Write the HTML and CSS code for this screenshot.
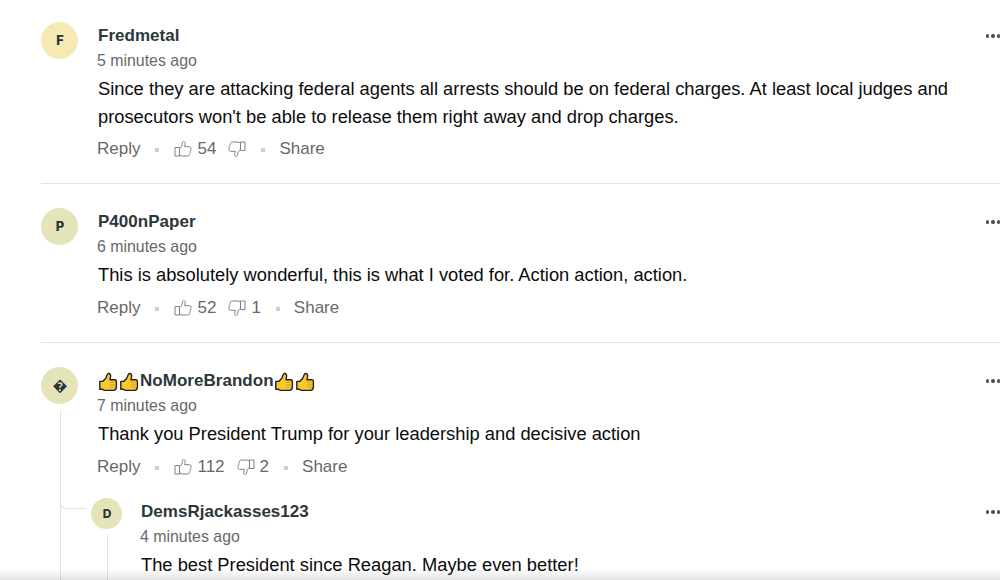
FILE: index.html
```
<!DOCTYPE html>
<html lang="en">

<head>
    <meta charset="UTF-8">
    <meta name="viewport" content="width=device-width, initial-scale=1.0">
    <title>Comments</title>
    <link rel="stylesheet" href="styles.css">
</head>

<body>
    <!-- shared icons -->
    <svg class="defs" width="0" height="0">
        <symbol id="like" viewBox="0 0 18 18">
            <path d="M1 7.5h4.5v8.5H1zM5.5 8.5C7.6 7.4 8.2 5.6 8.4 3.2C8.5 1 11 .8 11.2 3.2C11.3 4.6 11 5.7 10.6 6.7H15.6C17.3 6.8 17.4 8.4 16.6 9C17.2 9.8 17 10.8 16.2 11.4C16.6 12.3 16.3 13.1 15.6 13.6C15.8 14.8 15.2 16 13.8 16H8.6C7.4 16 6.6 15.4 5.5 15.2"/>
        </symbol>
        <symbol id="thumb" viewBox="0 0 20 20">
            <path fill="#fcc832" stroke="#24201c" stroke-width="1.4" stroke-linejoin="round" d="M1.8 9.4H4.8C6.6 8 8.6 5.6 9.4 2.4C9.8 .9 12.3 1.1 12.6 3.4C12.8 5.2 12.4 6.4 11.9 7.7H17C18.2 7.8 18.4 8.6 18.4 9.6V14.8C18.4 16.8 17.4 18.3 15.4 18.4H7C5.8 18.4 5 17.7 4.4 17.2H1.8z"/>
            <path fill="none" stroke="#d39a20" stroke-width=".8" d="M12 10.4h5.4M12 12.9h5.4M12 15.3h5"/>
        </symbol>
    </svg>

    <main class="comments">
        <article class="comment">
            <div class="side">
                <div class="avatar yellow">F</div>
            </div>
            <div class="main">
                <header class="head">
                    <h3 class="name">Fredmetal</h3>
                    <span class="more"><i></i><i></i><i></i></span>
                </header>
                <div class="time">5 minutes ago</div>
                <p class="text">Since they are attacking federal agents all arrests should be on federal charges. At least local judges and<br>prosecutors won't be able to release them right away and drop charges.</p>
                <div class="actions">
                    <span class="reply">Reply</span><i class="dot"></i>
                    <svg class="icon"><use href="#like"/></svg><span class="num">54</span>
                    <svg class="icon down"><use href="#like"/></svg><i class="dot"></i>
                    <span class="share">Share</span>
                </div>
            </div>
        </article>

        <article class="comment">
            <div class="side">
                <div class="avatar">P</div>
            </div>
            <div class="main">
                <header class="head">
                    <h3 class="name">P400nPaper</h3>
                    <span class="more"><i></i><i></i><i></i></span>
                </header>
                <div class="time">6 minutes ago</div>
                <p class="text">This is absolutely wonderful, this is what I voted for. Action action, action.</p>
                <div class="actions">
                    <span class="reply">Reply</span><i class="dot"></i>
                    <svg class="icon"><use href="#like"/></svg><span class="num">52</span>
                    <svg class="icon down"><use href="#like"/></svg><span class="num">1</span><i class="dot"></i>
                    <span class="share">Share</span>
                </div>
            </div>
        </article>

        <article class="comment thread">
            <div class="side">
                <div class="avatar unknown">&#xFFFD;</div>
                <div class="line"></div>
            </div>
            <div class="main">
                <header class="head">
                    <h3 class="name"><svg class="emoji"><use href="#thumb"/></svg><svg class="emoji"><use href="#thumb"/></svg>NoMoreBrandon<svg class="emoji"><use href="#thumb"/></svg><svg class="emoji"><use href="#thumb"/></svg></h3>
                    <span class="more"><i></i><i></i><i></i></span>
                </header>
                <div class="time">7 minutes ago</div>
                <p class="text">Thank you President Trump for your leadership and decisive action</p>
                <div class="actions">
                    <span class="reply">Reply</span><i class="dot"></i>
                    <svg class="icon"><use href="#like"/></svg><span class="num">112</span>
                    <svg class="icon down"><use href="#like"/></svg><span class="num">2</span><i class="dot"></i>
                    <span class="share">Share</span>
                </div>

                <!-- nested reply -->
                <div class="comment child">
                    <div class="branch"></div>
                    <div class="side">
                        <div class="avatar small">D</div>
                        <div class="line"></div>
                    </div>
                    <div class="main">
                        <header class="head">
                            <h3 class="name">DemsRjackasses123</h3>
                            <span class="more"><i></i><i></i><i></i></span>
                        </header>
                        <div class="time">4 minutes ago</div>
                        <p class="text">The best President since Reagan. Maybe even better!</p>
                    </div>
                </div>
            </div>
        </article>
    </main>
    <div class="fade"></div>
</body>

</html>
```
FILE: styles.css
```
* {
    box-sizing: border-box;
}

body {
    margin: 0;
    height: 580px;
    overflow: hidden;
    background: #fff;
    font-family: "Liberation Sans", Arial, sans-serif;
    color: #0c0c0c;
}

.defs {
    display: block;
}

.comments {
    height: 580px;
    overflow: hidden;
    padding-left: 41px;
}

.comment {
    display: flex;
    padding: 24px 0 20px;
    border-bottom: 1px solid #e3e3e3;
}

.comment:first-child {
    padding-top: 22px;
}

.side {
    display: flex;
    flex-direction: column;
    align-items: center;
    width: 37px;
    margin-right: 19px;
    flex: none;
}

.avatar {
    width: 37px;
    height: 37px;
    border-radius: 50%;
    background: #e4e4b8;
    color: #2a3437;
    font: 800 13px/36px Inter, "Open Sans", sans-serif;
    text-align: center;
    padding-left: 1px;
}

.avatar.yellow {
    background: #f5eab3;
}

.avatar.unknown {
    font-size: 15px;
    line-height: 38px;
}

.main {
    flex: 1;
    min-width: 0;
}

.head {
    display: flex;
    justify-content: space-between;
    align-items: center;
    height: 26px;
    margin-top: 1px;
    padding-left: 1px;
}

.name {
    display: flex;
    align-items: center;
    margin: 0;
    font-size: 17px;
    line-height: 26px;
    letter-spacing: .03px;
    color: #2d373b;
}

.more {
    display: flex;
    gap: 2px;
}

.more i {
    width: 3.5px;
    height: 3.5px;
    border-radius: 50%;
    background: #4d5357;
}

.time {
    height: 26px;
    font-size: 15.9px;
    line-height: 23px;
    color: #686868;
}

.text {
    margin: 0;
    padding-left: 1px;
    font-size: 18.32px;
    line-height: 28px;
    white-space: nowrap;
}

.actions {
    display: flex;
    align-items: center;
    height: 28px;
    margin-top: 4px;
    font-size: 17px;
    color: #686868;
}

/* one line comments are a pixel taller */
.comment + .comment .actions {
    margin-top: 5px;
}

.dot {
    width: 4px;
    height: 4px;
    margin: 1px 15px 0 15px;
    background: #cfcfcf;
}

.icon {
    width: 18px;
    height: 18px;
    fill: none;
    stroke: #808080;
    stroke-width: 1;
    stroke-linejoin: round;
}

.icon.down {
    margin-left: 12px;
    transform: rotate(180deg);
}

.num {
    margin-left: 5px;
}

.share {
    margin-left: -1px;
}

.emoji {
    width: 20px;
    height: 20px;
    margin: 2px 1px 0 0;
}

/* thread with replies */
.thread {
    padding-bottom: 0;
}

.line {
    width: 1px;
    flex: 1;
    margin: 6px 0 0 1px;
    background: #e3e3e3;
}

.child {
    position: relative;
    margin: 17px 0 0 -6px;
    padding: 0;
    border: 0;
    height: 120px;
}

.child .side {
    width: 31px;
    margin-right: 18px;
}

.avatar.small {
    width: 31px;
    height: 31px;
    font-size: 12px;
    line-height: 31px;
}

/* curve from the thread line to the reply avatar */
.branch {
    position: absolute;
    left: -31px;
    top: 0;
    width: 26px;
    height: 11px;
    border: solid #e3e3e3;
    border-width: 0 0 1px 1px;
    border-bottom-left-radius: 6px;
}

.fade {
    position: absolute;
    left: 0;
    right: 0;
    top: 569px;
    height: 11px;
    background: linear-gradient(rgba(0, 0, 0, 0), rgba(0, 0, 0, .11));
}
```
